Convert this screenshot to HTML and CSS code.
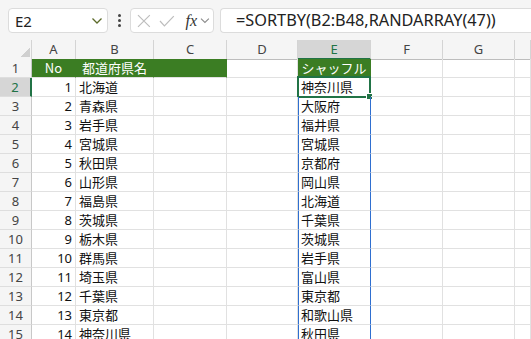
FILE: index.html
```html
<!DOCTYPE html>
<html lang="ja">
<head>
    <meta charset="UTF-8">
    <meta name="viewport" content="width=device-width, initial-scale=1.0">
    <title>SORTBY</title>
    <link rel="stylesheet" href="styles.css">
</head>
<body>
    <div class="toolbar">
        <div class="namebox">
            <span>E2</span>
            <svg class="chev olive" width="12" height="8" viewBox="0 0 12 8"><path d="M1.5 1.5 L6 6 L10.5 1.5" fill="none" stroke="currentColor" stroke-width="1.3"/></svg>
        </div>
        <div class="dots"><i></i><i></i><i></i></div>
        <div class="fxbox">
            <svg width="14" height="14" viewBox="0 0 14 14"><path d="M1 1 L13 13 M13 1 L1 13" stroke="#bdbdbd" stroke-width="1.2"/></svg>
            <svg width="16" height="12" viewBox="0 0 16 12"><path d="M1 6 L5.5 11 L15 1" fill="none" stroke="#bdbdbd" stroke-width="1.2"/></svg>
            <span class="fx">fx</span>
            <svg class="chev" width="10" height="7" viewBox="0 0 10 7"><path d="M1 1.5 L5 5.5 L9 1.5" fill="none" stroke="#8a8a8a" stroke-width="1.1"/></svg>
        </div>
        <div class="formula">=SORTBY(B2:B48,RANDARRAY(47))</div>
    </div>

    <div class="sheet">
        <div class="row head">
            <div class="corner"></div>
            <div class="ch">A</div><div class="ch">B</div><div class="ch">C</div><div class="ch">D</div>
            <div class="ch sel">E</div><div class="ch">F</div><div class="ch">G</div><div class="ch"></div>
        </div>
        <div class="row">
            <div class="rh">1</div>
            <div class="c green center">No</div><div class="c green center">都道府県名</div><div class="c green"></div><div class="c"></div>
            <div class="c green center">シャッフル</div><div class="c"></div><div class="c"></div><div class="c"></div>
        </div>
        <div class="row">
            <div class="rh sel">2</div>
            <div class="c num">1</div><div class="c">北海道</div><div class="c"></div><div class="c"></div>
            <div class="c spill active">神奈川県</div><div class="c"></div><div class="c"></div><div class="c"></div>
        </div>
        <div class="row">
            <div class="rh">3</div>
            <div class="c num">2</div><div class="c">青森県</div><div class="c"></div><div class="c"></div>
            <div class="c spill">大阪府</div><div class="c"></div><div class="c"></div><div class="c"></div>
        </div>
        <div class="row">
            <div class="rh">4</div>
            <div class="c num">3</div><div class="c">岩手県</div><div class="c"></div><div class="c"></div>
            <div class="c spill">福井県</div><div class="c"></div><div class="c"></div><div class="c"></div>
        </div>
        <div class="row">
            <div class="rh">5</div>
            <div class="c num">4</div><div class="c">宮城県</div><div class="c"></div><div class="c"></div>
            <div class="c spill">宮城県</div><div class="c"></div><div class="c"></div><div class="c"></div>
        </div>
        <div class="row">
            <div class="rh">6</div>
            <div class="c num">5</div><div class="c">秋田県</div><div class="c"></div><div class="c"></div>
            <div class="c spill">京都府</div><div class="c"></div><div class="c"></div><div class="c"></div>
        </div>
        <div class="row">
            <div class="rh">7</div>
            <div class="c num">6</div><div class="c">山形県</div><div class="c"></div><div class="c"></div>
            <div class="c spill">岡山県</div><div class="c"></div><div class="c"></div><div class="c"></div>
        </div>
        <div class="row">
            <div class="rh">8</div>
            <div class="c num">7</div><div class="c">福島県</div><div class="c"></div><div class="c"></div>
            <div class="c spill">北海道</div><div class="c"></div><div class="c"></div><div class="c"></div>
        </div>
        <div class="row">
            <div class="rh">9</div>
            <div class="c num">8</div><div class="c">茨城県</div><div class="c"></div><div class="c"></div>
            <div class="c spill">千葉県</div><div class="c"></div><div class="c"></div><div class="c"></div>
        </div>
        <div class="row">
            <div class="rh">10</div>
            <div class="c num">9</div><div class="c">栃木県</div><div class="c"></div><div class="c"></div>
            <div class="c spill">茨城県</div><div class="c"></div><div class="c"></div><div class="c"></div>
        </div>
        <div class="row">
            <div class="rh">11</div>
            <div class="c num">10</div><div class="c">群馬県</div><div class="c"></div><div class="c"></div>
            <div class="c spill">岩手県</div><div class="c"></div><div class="c"></div><div class="c"></div>
        </div>
        <div class="row">
            <div class="rh">12</div>
            <div class="c num">11</div><div class="c">埼玉県</div><div class="c"></div><div class="c"></div>
            <div class="c spill">富山県</div><div class="c"></div><div class="c"></div><div class="c"></div>
        </div>
        <div class="row">
            <div class="rh">13</div>
            <div class="c num">12</div><div class="c">千葉県</div><div class="c"></div><div class="c"></div>
            <div class="c spill">東京都</div><div class="c"></div><div class="c"></div><div class="c"></div>
        </div>
        <div class="row">
            <div class="rh">14</div>
            <div class="c num">13</div><div class="c">東京都</div><div class="c"></div><div class="c"></div>
            <div class="c spill">和歌山県</div><div class="c"></div><div class="c"></div><div class="c"></div>
        </div>
        <div class="row">
            <div class="rh">15</div>
            <div class="c num">14</div><div class="c">神奈川県</div><div class="c"></div><div class="c"></div>
            <div class="c spill">秋田県</div><div class="c"></div><div class="c"></div><div class="c"></div>
        </div>
    </div>
</body>
</html>
```

FILE: styles.css
```css
body {
    margin: 0;
    background: #fff;
    font-family: "Noto Sans", sans-serif;
    overflow: hidden;
}

.toolbar {
    height: 40px;
    background: #f5f5f5;
    display: flex;
    align-items: flex-start;
    padding-top: 8px;
    box-sizing: border-box;
}

.namebox {
    margin-left: 8px;
    width: 100px;
    height: 25px;
    box-sizing: border-box;
    background: #fff;
    border: 1px solid #dcdcdc;
    border-radius: 4px;
    display: flex;
    align-items: center;
    justify-content: space-between;
    padding: 0 4px 0 6px;
    font-size: 15px;
    color: #222;
}

.chev {
    color: #5c6a2a;
}

.dots {
    width: 22px;
    height: 25px;
    display: flex;
    flex-direction: column;
    align-items: center;
    justify-content: center;
    gap: 2px;
}

.dots i {
    width: 3px;
    height: 3px;
    border-radius: 50%;
    background: #444;
}

.fxbox {
    width: 84px;
    height: 25px;
    box-sizing: border-box;
    background: #fff;
    border: 1px solid #dcdcdc;
    border-radius: 4px;
    display: flex;
    align-items: center;
    padding: 0 3px 0 6px;
    gap: 8px;
}

.fx {
    font-family: "Liberation Serif", serif;
    font-style: italic;
    font-size: 16px;
    color: #333;
    margin-left: 3px;
    margin-right: -5px;
}

.formula {
    margin-left: 6px;
    flex: 1;
    height: 25px;
    box-sizing: border-box;
    background: #fff;
    border: 1px solid #dcdcdc;
    border-right: none;
    border-radius: 4px 0 0 4px;
    padding-left: 15px;
    font-size: 16.3px;
    line-height: 23px;
    color: #222;
    white-space: nowrap;
}

.sheet {
    background: #fff;
    overflow: hidden;
}

.row {
    display: grid;
    grid-template-columns: 32px 44px 78px 73px 71px 73px 72px 72px minmax(0, 1fr);
    height: 19px;
}

.head {
    background: #f5f5f5;
}

.corner {
    border-right: 1px solid #d4d4d4;
    border-bottom: 1px solid #bdbdbd;
    background: linear-gradient(135deg, transparent 62%, #d0d0d0 62%) no-repeat;
    background-size: 12px 12px;
    background-position: 18px 5px;
}

.ch {
    border-right: 1px solid #d4d4d4;
    border-bottom: 1px solid #bdbdbd;
    text-align: center;
    font-size: 13px;
    line-height: 18px;
    color: #444;
}

.ch.sel {
    background: #d6d6d6;
    border-bottom: 2px solid #217346;
    color: #217346;
}

.rh {
    background: #f5f5f5;
    border-right: 1px solid #c8c8c8;
    border-bottom: 1px solid #dedede;
    text-align: center;
    font-size: 13px;
    line-height: 18px;
    color: #444;
}

.rh.sel {
    background: #d6d6d6;
    border-right: 2px solid #217346;
    color: #217346;
}

.c {
    position: relative;
    border-right: 1px solid #e1e1e1;
    border-bottom: 1px solid #e1e1e1;
    padding: 0 3px;
    font-family: "Noto Sans CJK JP", sans-serif;
    font-size: 13px;
    line-height: 18px;
    color: #111;
    white-space: nowrap;
}

.num {
    text-align: right;
    font-family: "Noto Sans", sans-serif;
}

.center {
    text-align: center;
}

.green {
    background: #3b7d23;
    border-right-color: #3b7d23;
    color: #fff;
}

.spill {
    border-left: 1px solid #2f6fd0;
    border-right: 1px solid #2f6fd0;
    padding-left: 2px;
}

.active::before {
    content: "";
    position: absolute;
    left: -2px;
    top: -2px;
    right: -1px;
    bottom: -2px;
    border: 2px solid #217346;
}

.active::after {
    content: "";
    position: absolute;
    right: -3px;
    bottom: -4px;
    width: 5px;
    height: 5px;
    background: #217346;
    border: 1px solid #fff;
}
```
